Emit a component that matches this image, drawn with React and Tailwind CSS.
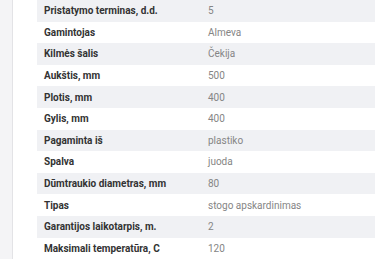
import React from 'react'

const rows = [
    ['Pristatymo terminas, d.d.', '5'],
    ['Gamintojas', 'Almeva'],
    ['Kilmės šalis', 'Čekija'],
    ['Aukštis, mm', '500'],
    ['Plotis, mm', '400'],
    ['Gylis, mm', '400'],
    ['Pagaminta iš', 'plastiko'],
    ['Spalva', 'juoda'],
    ['Dūmtraukio diametras, mm', '80'],
    ['Tipas', 'stogo apskardinimas'],
    ['Garantijos laikotarpis, m.', '2'],
    ['Maksimali temperatūra, C', '120'],
]

export default function App() {
    return (
        <div className="flex h-[259px] w-[375px] overflow-hidden bg-white" style={{ fontFamily: 'Roboto, "Liberation Sans", sans-serif' }}>
            <div className="w-[13px] shrink-0 border-r border-[#e3e3e6] bg-[#f4f4f6]" />
            <div className="flex-1 pl-[24px]">
                <div className="flex flex-col">
                    {rows.map(([label, value], i) => (
                        <div
                            key={label}
                            className={`flex h-[21.6px] items-center text-[10px] ${i % 2 === 0 ? 'bg-[#f0f1f4]' : 'bg-white'}`}
                        >
                            <div className="w-[171px] shrink-0 pl-[7px] font-bold text-[#333333]">{label}</div>
                            <div className="text-[#858585]">{value}</div>
                        </div>
                    ))}
                </div>
            </div>
        </div>
    )
}
